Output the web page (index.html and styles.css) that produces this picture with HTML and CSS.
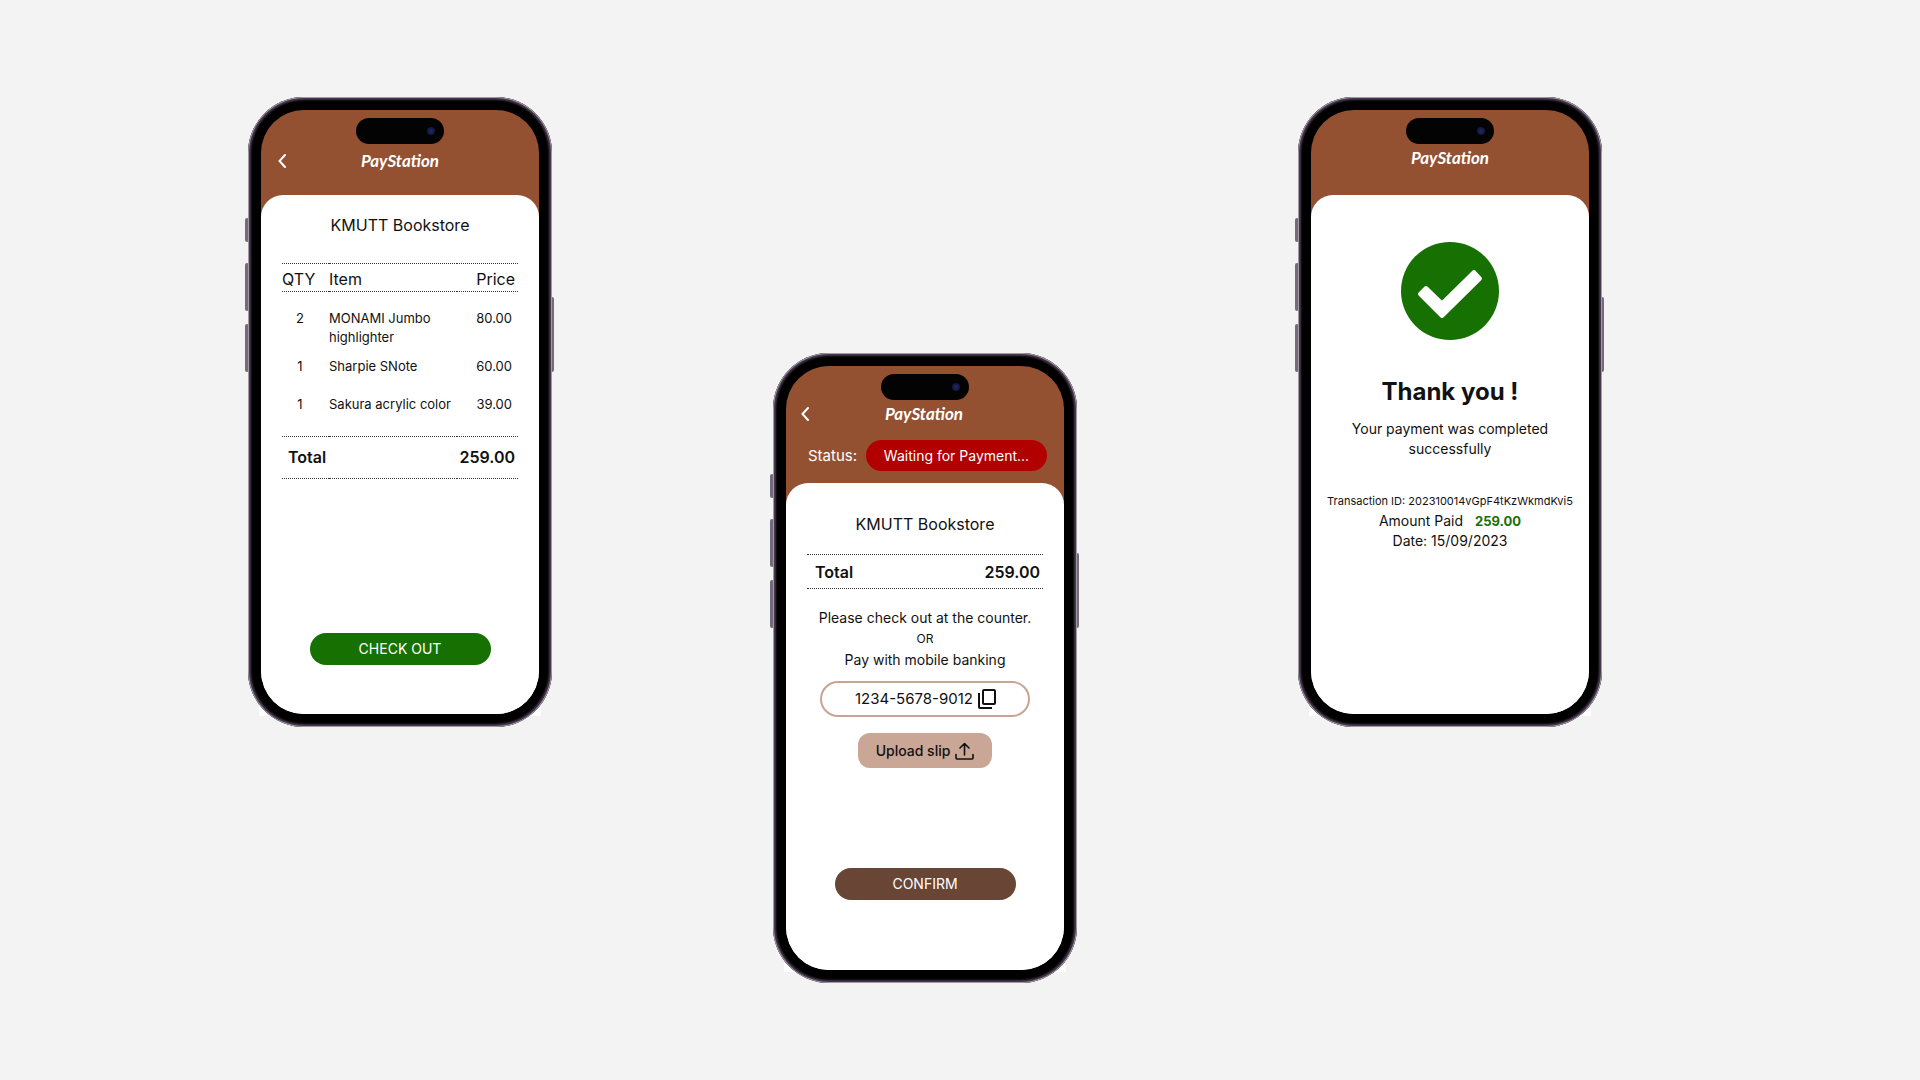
FILE: index.html
```html
<!DOCTYPE html>
<html lang="en">
<head>
<meta charset="utf-8">
<meta name="viewport" content="width=device-width, initial-scale=1">
<title>PayStation</title>
<link rel="stylesheet" href="styles.css">
</head>
<body>
<main class="showcase">

  <section class="phone" aria-label="Order summary">
    <span class="key key-mute"></span><span class="key key-up"></span><span class="key key-down"></span><span class="key key-power"></span>
    <div class="screen">
      <div class="island"><span class="lens"></span></div>
      <header class="topbar">
        <div class="topbar-row">
          <button class="back" type="button" aria-label="Back"><svg viewBox="0 0 8 14" width="8" height="14"><path d="M7 1 1.5 7 7 13"/></svg></button>
          <span class="logo">PayStation</span>
        </div>
      </header>
      <div class="sheet">
        <h1 class="store">KMUTT Bookstore</h1>
        <table class="order">
          <thead>
            <tr><th class="qty">QTY</th><th>Item</th><th class="price">Price</th></tr>
          </thead>
          <tbody>
            <tr><td class="qty">2</td><td>MONAMI Jumbo<br>highlighter</td><td class="price">80.00</td></tr>
            <tr><td class="qty">1</td><td>Sharpie SNote</td><td class="price">60.00</td></tr>
            <tr><td class="qty">1</td><td>Sakura acrylic color</td><td class="price">39.00</td></tr>
          </tbody>
          <tfoot>
            <tr><th colspan="2">Total</th><td class="price">259.00</td></tr>
          </tfoot>
        </table>
        <button class="action action-checkout" type="button">CHECK OUT</button>
      </div>
    </div>
  </section>

  <section class="phone phone-low" aria-label="Payment">
    <span class="key key-mute"></span><span class="key key-up"></span><span class="key key-down"></span><span class="key key-power"></span>
    <div class="screen">
      <div class="island"><span class="lens"></span></div>
      <header class="topbar topbar-tall">
        <div class="topbar-row">
          <button class="back" type="button" aria-label="Back"><svg viewBox="0 0 8 14" width="8" height="14"><path d="M7 1 1.5 7 7 13"/></svg></button>
          <span class="logo">PayStation</span>
        </div>
        <p class="status">Status: <span class="badge">Waiting for Payment...</span></p>
      </header>
      <div class="sheet sheet-pay">
        <h1 class="store">KMUTT Bookstore</h1>
        <div class="total"><span>Total</span><span>259.00</span></div>
        <p class="hint">Please check out at the counter.</p>
        <p class="hint hint-or">OR</p>
        <label class="hint" for="account">Pay with mobile banking</label>
        <div class="account">
          <input id="account" type="text" value="1234-5678-9012" readonly>
          <button type="button" class="copy" aria-label="Copy account number"><svg viewBox="0 0 18 20" width="18" height="20"><rect x="5" y="1" width="12" height="14" rx="1"/><path d="M1 4v14a1 1 0 0 0 1 1h12"/></svg></button>
        </div>
        <button class="upload" type="button">Upload slip
          <svg viewBox="0 0 19 18" width="19" height="18"><path d="M9.500 13V1.500M5 6l4.500-4.500L14 6M1 12.500V16a1 1 0 0 0 1 1h15a1 1 0 0 0 1-1v-3.500"/></svg>
        </button>
        <button class="action action-confirm" type="button">CONFIRM</button>
      </div>
    </div>
  </section>

  <section class="phone" aria-label="Payment completed">
    <span class="key key-mute"></span><span class="key key-up"></span><span class="key key-down"></span><span class="key key-power"></span>
    <div class="screen">
      <div class="island"><span class="lens"></span></div>
      <header class="topbar topbar-plain">
        <div class="topbar-row"><span class="logo">PayStation</span></div>
      </header>
      <div class="sheet sheet-done">
        <svg class="tick" viewBox="0 0 98 98" width="98" height="98"><circle cx="49" cy="49" r="49" fill="#177002"/><path d="M19 52 25 46 41 61.500 73 30 79 36.500 41 74Z" fill="#fff" stroke="#fff" stroke-width="4" stroke-linejoin="round"/></svg>
        <h1 class="thanks">Thank you !</h1>
        <p class="message">Your payment was completed successfully</p>
        <p class="transaction">Transaction ID: 202310014vGpF4tKzWkmdKvi5</p>
        <p class="detail">Amount Paid <strong>259.00</strong></p>
        <p class="detail">Date: 15/09/2023</p>
      </div>
    </div>
  </section>

</main>
</body>
</html>
```
FILE: styles.css
```css
* { box-sizing: border-box; }

body {
  margin: 0;
  background: #f3f3f3;
  color: #111;
  font-family: Inter, "Open Sans", sans-serif;
  font-size: 13px;
  line-height: 20px;
}

h1, p { margin: 0; font-weight: 400; }

button, input {
  margin: 0;
  padding: 0;
  border: 0;
  background: none;
  color: inherit;
  font: inherit;
}

svg { display: block; }

.showcase {
  display: flex;
  justify-content: space-between;
  align-items: flex-start;
  gap: 24px;
  isolation: isolate;
  min-height: 100vh;
  padding: 97px 318px 97px 248px;
}

/* Device */
.phone {
  position: relative;
  flex: none;
  width: 304px;
  padding: 13px;
  border-radius: 56px;
  background: #000;
  box-shadow: inset 0 0 0 1px #a29aa3, inset 0 0 2px 3px #4a3b50;
}

.phone::before {
  content: "";
  position: absolute;
  z-index: -1;
  right: 11px;
  bottom: 11px;
  left: 11px;
  height: 20px;
  background: #fff;
}

.phone-low { align-self: flex-end; }

.key {
  position: absolute;
  z-index: -1;
  left: -3px;
  width: 4px;
  border-radius: 2px;
  background: #75697c;
}
.key-mute { top: 121px; height: 24px; }
.key-up { top: 166px; height: 48px; }
.key-down { top: 227px; height: 48px; }
.key-power { top: 200px; right: -2px; left: auto; height: 75px; }

.screen {
  position: relative;
  display: flex;
  flex-direction: column;
  min-height: 604px;
  overflow: hidden;
  border-radius: 43px;
  background: linear-gradient(#935132 50%, #fff 50%);
}

.island {
  position: absolute;
  top: 8px;
  left: 50%;
  display: flex;
  align-items: center;
  justify-content: flex-end;
  width: 88px;
  height: 26px;
  margin-left: -44px;
  padding-right: 9px;
  border-radius: 13px;
  background: #030303;
}
.lens {
  width: 8px;
  height: 8px;
  border-radius: 50%;
  background: radial-gradient(#232a6e, #0c0a1c);
}

/* Header */
.topbar {
  height: 85px;
  padding: 39px 17px 0;
  color: #fff;
}
.topbar-tall {
  height: 117px;
  padding: 36px 17px 0 15px;
}
.topbar-plain { padding-top: 36px; }
.topbar-row {
  display: grid;
  grid-template-columns: 8px 1fr 8px;
  align-items: center;
  height: 24px;
}
.back { width: 8px; height: 14px; }
.back svg {
  fill: none;
  stroke: #fff;
  stroke-width: 2;
  stroke-linecap: round;
}
.logo {
  grid-column: 2;
  text-align: center;
  font: italic 700 17px/24px Lato, sans-serif;
}
.status {
  display: flex;
  justify-content: space-between;
  align-items: center;
  margin-top: 14px;
  padding-left: 7px;
  font-size: 15px;
}
.badge {
  width: 181px;
  border-radius: 16px;
  background: #b20000;
  font-size: 14px;
  line-height: 31px;
  text-align: center;
}

/* Content sheet */
.sheet {
  display: flex;
  flex: 1;
  flex-direction: column;
  align-items: center;
  padding: 18px 21px 49px;
  border-radius: 22px 22px 0 0;
  background: #fff;
}
.sheet-pay { padding-top: 29px; padding-bottom: 70px; }
.sheet-done { padding-top: 47px; }

.store {
  font-size: 16px;
  line-height: 24px;
}

.order {
  width: 100%;
  margin-top: 26px;
  border-collapse: collapse;
  font-size: 13px;
  line-height: 19px;
}
.order th, .order td {
  padding: 0;
  text-align: left;
  vertical-align: top;
}
.order thead tr, .order tfoot tr {
  border-top: 1px dotted #333;
  border-bottom: 1px dotted #333;
}
.order thead th {
  height: 28px;
  padding-top: 3px;
  font-size: 16px;
  font-weight: 400;
  vertical-align: middle;
}
.order .qty { width: 47px; }
.order td.qty { padding-right: 11px; text-align: center; }
.order .price { padding-right: 3px; text-align: right; }
.order tbody .price { padding-right: 6px; }
.order tbody td { padding-top: 10px; }
.order tbody tr:first-child td { padding-top: 17px; }
.order tbody tr:last-child td { padding-top: 19px; padding-bottom: 22px; }
.order tfoot th, .order tfoot td {
  height: 42px;
  font-size: 16px;
  font-weight: 600;
  vertical-align: middle;
}
.order tfoot th { padding-left: 6px; }

.action {
  width: 181px;
  height: 32px;
  margin-top: auto;
  border-radius: 16px;
  color: #fff;
  font-size: 14px;
}
.action-checkout { background: #177002; }
.action-confirm { background: #694536; }

.total {
  display: flex;
  justify-content: space-between;
  align-items: center;
  width: 100%;
  height: 35px;
  margin: 18px 0;
  padding: 0 3px 0 8px;
  border-top: 1px dotted #333;
  border-bottom: 1px dotted #333;
  font-size: 16px;
  font-weight: 600;
}

.hint {
  font-size: 14px;
  line-height: 21px;
}
.hint-or { font-size: 12px; }

.account {
  display: flex;
  align-items: center;
  justify-content: center;
  gap: 4px;
  width: 210px;
  height: 36px;
  margin-top: 11px;
  border: 2px solid #c9a494;
  border-radius: 18px;
}
.account input {
  width: 120px;
  font-size: 15px;
  text-align: center;
}
.copy svg, .upload svg {
  fill: none;
  stroke: #111;
  stroke-width: 2;
}

.upload {
  display: flex;
  align-items: center;
  justify-content: center;
  gap: 5px;
  width: 134px;
  height: 35px;
  margin-top: 16px;
  border-radius: 12px;
  background: #c9a696;
  font-size: 14px;
  font-weight: 500;
}
.upload svg {
  stroke-width: 1.6;
  stroke-linecap: round;
  stroke-linejoin: round;
}

.thanks {
  margin-top: 36px;
  font-size: 24px;
  font-weight: 700;
  line-height: 32px;
}
.message {
  width: 210px;
  margin-top: 11px;
  font-size: 14px;
  text-align: center;
}
.transaction {
  margin-top: 32px;
  font-size: 11px;
  white-space: nowrap;
}
.detail { font-size: 14px; }
.detail strong {
  margin-left: 8px;
  color: #177002;
  font-size: 13px;
}
```
